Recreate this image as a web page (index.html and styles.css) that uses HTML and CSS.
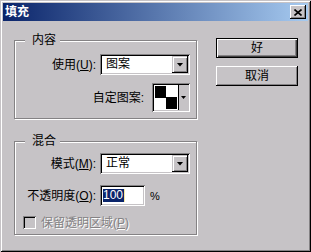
FILE: index.html
```html
<!DOCTYPE html>
<html lang="zh-CN">
<head>
  <meta charset="UTF-8" />
  <title>填充</title>
  <link rel="stylesheet" href="styles.css">
</head>
<body>

  <div class="window">
    <div class="titlebar">
      <span class="title">填充</span>
      <button class="close" type="button">
        <svg width="8" height="7" viewBox="0 0 8 7"><path d="M0.5 0.5 L7.5 6.5 M7.5 0.5 L0.5 6.5" stroke="#000" stroke-width="1.6" fill="none"/></svg>
      </button>
    </div>

    <div class="dialog-body">
      <div class="groups">

        <!-- Content -->
        <fieldset class="group group-content">
          <legend>内容</legend>
          <div class="row">
            <label>使用(<u>U</u>):</label>
            <div class="combo">
              <span class="combo-value">图案</span>
              <span class="combo-btn"></span>
            </div>
          </div>
          <div class="row row-pattern">
            <label>自定图案:</label>
            <div class="pattern-picker">
              <span class="swatch-frame"><span class="swatch"></span></span>
              <span class="picker-btn"></span>
            </div>
          </div>
        </fieldset>

        <!-- Blending -->
        <fieldset class="group group-blend">
          <legend>混合</legend>
          <div class="row">
            <label>模式(<u>M</u>):</label>
            <div class="combo">
              <span class="combo-value">正常</span>
              <span class="combo-btn"></span>
            </div>
          </div>
          <div class="row row-opacity">
            <label>不透明度(<u>O</u>):</label>
            <div class="opacity-cell">
              <div class="text-field"><span class="selected">100</span><span class="caret"></span></div>
              <span class="unit">%</span>
            </div>
          </div>
          <div class="check-row">
            <span class="checkbox"></span>
            <span class="check-label">保留透明区域(<u>P</u>)</span>
          </div>
        </fieldset>

      </div>

      <div class="actions">
        <button class="btn btn-default" type="button">好</button>
        <button class="btn" type="button">取消</button>
      </div>
    </div>
  </div>

</body>
</html>
```

FILE: styles.css
```css
* {
  box-sizing: border-box;
}
body {
  margin: 0;
  background-color: #c6c3c6;
  font-family: "Liberation Sans", "Noto Sans CJK SC", sans-serif;
  font-size: 12px;
  line-height: 12px;
  color: #000;
}
.window {
  width: 311px;
  height: 252px;
  padding: 3px;
  background-color: #c6c3c6;
  box-shadow: inset 1px 1px #c6c3c6, inset -1px -1px #000,
              inset 2px 2px #fff, inset -2px -2px #848284;
}
.titlebar {
  height: 18px;
  display: flex;
  align-items: center;
  justify-content: space-between;
  padding: 0 2px;
  background: linear-gradient(to right, #0a246a, #a6caf0);
}
.title {
  color: #fff;
  font-weight: bold;
  font-size: 12px;
}
.close {
  width: 16px;
  height: 14px;
  padding: 0;
  border: none;
  background-color: #c6c3c6;
  display: flex;
  align-items: center;
  justify-content: center;
  box-shadow: inset -1px -1px #000, inset 1px 1px #fff, inset -2px -2px #848284;
}
.close svg {
  display: block;
}

.dialog-body {
  display: flex;
  padding: 13px 0 0 11px;
}
.groups {
  width: 184px;
}
.group {
  width: 183px;
  min-width: 0;
  margin: 0;
  padding: 7px 6px 6px 6px;
  border: 1px solid #848284;
  box-shadow: inset 1px 1px #fff, 1px 1px #fff;
}
.group-blend {
  margin-top: 16px;
  padding-top: 5px;
  padding-bottom: 5px;
}
legend {
  margin-left: 4px;
  padding: 0 4px 0 7px;
  height: 13px;
  line-height: 13px;
  background-color: #c6c3c6;
}

.row {
  display: flex;
  justify-content: flex-end;
  align-items: center;
  gap: 4px;
}
.row-pattern {
  margin-top: 8px;
  gap: 8px;
}
.row-opacity {
  margin-top: 11px;
}

/* combo box */
.combo {
  width: 90px;
  height: 21px;
  display: flex;
  padding: 2px;
  background-color: #fff;
  box-shadow: inset 1px 1px #848284, inset -1px -1px #fff,
              inset 2px 2px #000, inset -2px -2px #c6c3c6;
}
.combo-value {
  flex: 1;
  padding-left: 4px;
  line-height: 17px;
}
.combo-btn {
  width: 16px;
  height: 17px;
  display: flex;
  align-items: center;
  justify-content: center;
  background-color: #c6c3c6;
  box-shadow: inset -1px -1px #000, inset 1px 1px #c6c3c6,
              inset 2px 2px #fff, inset -2px -2px #848284;
}
.combo-btn::after,
.picker-btn::after {
  content: "";
  width: 7px;
  height: 4px;
  background-color: #000;
  clip-path: polygon(0 0, 100% 0, 50% 100%);
}

/* pattern picker */
.pattern-picker {
  width: 38px;
  height: 29px;
  display: flex;
  padding: 2px;
  background-color: #c6c3c6;
  box-shadow: inset 1px 1px #848284, inset -1px -1px #fff,
              inset 2px 2px #000, inset -2px -2px #c6c3c6;
}
.swatch-frame {
  width: 25px;
  padding: 1px;
  background-color: #fff;
  border-right: 1px solid #000;
}
.swatch {
  display: block;
  width: 100%;
  height: 100%;
  background: conic-gradient(#fff 0 25%, #000 0 50%, #fff 0 75%, #000 0);
}
.picker-btn {
  flex: 1;
  display: flex;
  align-items: center;
  justify-content: center;
}
.picker-btn::after {
  width: 5px;
  height: 3px;
}

/* opacity */
.opacity-cell {
  width: 90px;
  display: flex;
  align-items: center;
  gap: 5px;
}
.text-field {
  width: 45px;
  height: 21px;
  display: flex;
  align-items: center;
  padding: 2px 2px 2px 3px;
  background-color: #fff;
  box-shadow: inset 1px 1px #848284, inset -1px -1px #fff,
              inset 2px 2px #000, inset -2px -2px #c6c3c6;
}
.selected {
  background-color: #0a246a;
  color: #fff;
  padding: 0 1px 1px 0;
}
.caret {
  width: 1px;
  height: 13px;
  background-color: #f4e8a0;
}
.unit {
  font-size: 11px;
}

/* disabled checkbox */
.check-row {
  display: flex;
  align-items: center;
  gap: 5px;
  margin-top: 10px;
  padding-left: 2px;
}
.checkbox {
  width: 13px;
  height: 13px;
  box-shadow: inset 1px 1px #848284, inset -1px -1px #fff,
              inset 2px 2px #000, inset -2px -2px #c6c3c6;
}
.check-label {
  color: #848284;
  text-shadow: 1px 1px #fff;
}

/* buttons */
.actions {
  display: flex;
  flex-direction: column;
  gap: 8px;
  margin: 4px 0 0 18px;
}
.btn {
  width: 82px;
  height: 20px;
  padding: 0;
  border: none;
  background-color: #c6c3c6;
  font: inherit;
  color: #000;
  box-shadow: inset -1px -1px #000, inset 1px 1px #fff, inset -2px -2px #848284;
}
.btn-default {
  box-shadow: inset 0 0 0 1px #000, inset 2px 2px #fff,
              inset -2px -2px #424142, inset -3px -3px #848284;
}
```
